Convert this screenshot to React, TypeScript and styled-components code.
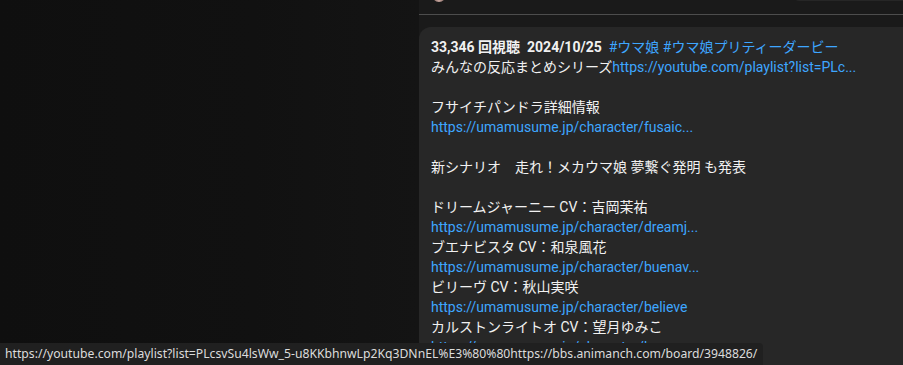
import styled, { createGlobalStyle } from "styled-components";

const GlobalStyle = createGlobalStyle`
  html, body {
    margin: 0;
    padding: 0;
    background: #0f0f0f;
    overflow: hidden;
  }
  body {
    font-family: Roboto, "Noto Sans CJK JP", sans-serif;
  }
`;

interface Line {
  text?: string;
  link?: string;
}

const lines: Line[] = [
  { text: "みんなの反応まとめシリーズ", link: "https://youtube.com/playlist?list=PLc..." },
  {},
  { text: "フサイチパンドラ詳細情報" },
  { link: "https://umamusume.jp/character/fusaic..." },
  {},
  { text: "新シナリオ　走れ！メカウマ娘 夢繋ぐ発明 も発表" },
  {},
  { text: "ドリームジャーニー CV：吉岡茉祐" },
  { link: "https://umamusume.jp/character/dreamj..." },
  { text: "ブエナビスタ CV：和泉風花" },
  { link: "https://umamusume.jp/character/buenav..." },
  { text: "ビリーヴ CV：秋山実咲" },
  { link: "https://umamusume.jp/character/believe" },
  { text: "カルストンライトオ CV：望月ゆみこ" },
  { link: "https://umamusume.jp/character/karusu..." },
];

export default function App() {
  return (
    <>
      <GlobalStyle />
      <Page>
        <Player />
        <Side>
          <OwnerRow>
            <Avatar />
            <JoinButton />
          </OwnerRow>
          <Divider />
          <Description>
            <Line>
              <Meta>33,346 回視聴&nbsp;&nbsp;2024/10/25</Meta>&nbsp;&nbsp;
              <Link>#ウマ娘</Link> <Link>#ウマ娘プリティーダービー</Link>
            </Line>
            {lines.map((l, i) => (
              <Line key={i}>
                {l.text}
                {l.link && <Link>{l.link}</Link>}
                {!l.text && !l.link && "\u00a0"}
              </Line>
            ))}
          </Description>
        </Side>
      </Page>
      <StatusBar>
        https://youtube.com/playlist?list=PLcsvSu4lsWw_5-u8KKbhnwLp2Kq3DNnEL%E3%80%80https://bbs.animanch.com/board/3948826/
      </StatusBar>
    </>
  );
}

const Page = styled.div`
  display: flex;
  width: 903px;
  height: 365px;
  overflow: hidden;
`;

const Player = styled.div`
  width: 419px;
  flex-shrink: 0;
  background: linear-gradient(90deg, #0f0f0f 0%, #111111 60%, #141414 100%);
`;

const Side = styled.div`
  flex: 1;
  display: flex;
  flex-direction: column;
  background: #1a1a1a;
`;

const OwnerRow = styled.div`
  height: 14px;
  display: flex;
  justify-content: space-between;
  align-items: flex-start;
  overflow: hidden;
`;

const Avatar = styled.div`
  width: 14px;
  height: 14px;
  margin: -12px 0 0 13px;
  border-radius: 50%;
  background: radial-gradient(circle at 50% 90%, #c9a8a0 0%, #6a4b48 60%, #1a1a1a 100%);
`;

const JoinButton = styled.div`
  width: 110px;
  height: 14px;
  margin-top: -13px;
  border-radius: 0 0 0 6px;
  background: #262626;
`;

const Divider = styled.div`
  height: 1px;
  background: #4d4d4d;
  margin-bottom: 12px;
`;

const Description = styled.div`
  flex: 1;
  background: #272727;
  border-radius: 12px 0 0 0;
  padding: 10px 12px 0;
  color: #f1f1f1;
  font-size: 14px;
  line-height: 20px;
`;

const Line = styled.div`
  white-space: nowrap;
  height: 20px;
`;

const Meta = styled.span`
  font-weight: 700;
`;

const Link = styled.span`
  color: #3ea6ff;
`;

const StatusBar = styled.div`
  position: fixed;
  left: 0;
  bottom: 0;
  height: 22px;
  padding: 0 6px 0 5px;
  line-height: 22px;
  background: #202020;
  border-top-right-radius: 4px;
  color: #dcdcdc;
  font-family: "Noto Sans", "Open Sans", sans-serif;
  font-size: 12.2px;
  white-space: nowrap;
`;
